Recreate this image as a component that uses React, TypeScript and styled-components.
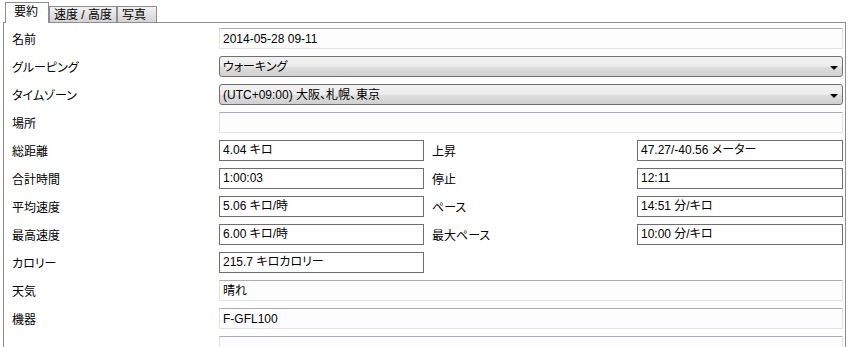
import React from "react";
import styled, { createGlobalStyle, css } from "styled-components";

const Global = createGlobalStyle`
  html, body {
    margin: 0;
    padding: 0;
    background: #ffffff;
    overflow: hidden;
  }
  body {
    font-family: "Liberation Sans", "Noto Sans CJK JP", sans-serif;
    font-size: 12px;
    color: #000000;
    font-feature-settings: "palt";
  }
`;

const Window = styled.div`
  width: 852px;
  height: 347px;
  overflow: hidden;
  padding-left: 3px;
  box-sizing: border-box;
`;

const TabBar = styled.div`
  display: flex;
  align-items: flex-end;
  height: 22px;
  padding-left: 2px;
`;

const Tab = styled.div<{ $active?: boolean }>`
  box-sizing: border-box;
  display: flex;
  align-items: center;
  border: 1px solid #8c8e94;
  border-bottom: none;
  line-height: 14px;
  white-space: nowrap;
  ${(p) =>
    p.$active
      ? css`
          height: 21px;
          margin-bottom: -1px;
          padding: 0 0 2px 8px;
          background: #ffffff;
          position: relative;
          z-index: 1;
        `
      : css`
          height: 16px;
          padding: 0 0 0 4px;
          background: linear-gradient(#f1f1f1, #e2e2e2 50%, #d3d3d3);
        `}
`;

const Panel = styled.div`
  box-sizing: border-box;
  width: 843px;
  height: 400px;
  border: 1px solid #8c8e94;
  background: #ffffff;
`;

const Form = styled.div`
  display: grid;
  grid-template-columns: 207px 205px 213px 206px;
  grid-auto-rows: 21px;
  row-gap: 7px;
  padding: 5px 2px 0 8px;
`;

const Label = styled.div<{ $right?: boolean }>`
  grid-column: ${(p) => (p.$right ? "3" : "1")};
  padding-left: ${(p) => (p.$right ? "8px" : "0")};
  align-self: center;
  line-height: 14px;
  padding-top: 2px;
  white-space: nowrap;
`;

const WideField = styled.div<{ $tall?: boolean }>`
  grid-column: 2 / -1;
  box-sizing: border-box;
  height: ${(p) => (p.$tall ? "60px" : "21px")};
  border: 1px solid #dfe2e8;
  border-top-color: #abadb3;
  background: #fdfdfd;
  padding: 3px 0 0 3px;
  line-height: 14px;
  white-space: nowrap;
`;

const SmallField = styled.div<{ $right?: boolean }>`
  grid-column: ${(p) => (p.$right ? "4" : "2")};
  box-sizing: border-box;
  width: ${(p) => (p.$right ? "206px" : "205px")};
  height: 21px;
  border: 1px solid #6e6e6e;
  background: #ffffff;
  padding: 2px 0 0 3px;
  line-height: 14px;
  white-space: nowrap;
`;

const Select = styled.div`
  grid-column: 2 / -1;
  box-sizing: border-box;
  height: 21px;
  display: flex;
  align-items: center;
  justify-content: space-between;
  border: 1px solid #707070;
  border-radius: 3px;
  background: linear-gradient(#f2f2f2, #ebebeb 50%, #dedede 51%, #d0d0d0);
  padding: 1px 4px 0 3px;
  line-height: 14px;
  white-space: nowrap;
`;

const Arrow = styled.span`
  width: 0;
  height: 0;
  border-left: 4px solid transparent;
  border-right: 4px solid transparent;
  border-top: 4px solid #000000;
  margin-top: 1px;
`;

type Pair = { label: string; value: string };

const halfRows: Array<[Pair, Pair | null]> = [
  [{ label: "総距離", value: "4.04 キロ" }, { label: "上昇", value: "47.27/-40.56 メーター" }],
  [{ label: "合計時間", value: "1:00:03" }, { label: "停止", value: "12:11" }],
  [{ label: "平均速度", value: "5.06 キロ/時" }, { label: "ペース", value: "14:51 分/キロ" }],
  [{ label: "最高速度", value: "6.00 キロ/時" }, { label: "最大ペース", value: "10:00 分/キロ" }],
  [{ label: "カロリー", value: "215.7 キロカロリー" }, null],
];

export default function App() {
  return (
    <>
      <Global />
      <Window>
        <TabBar>
          <Tab $active style={{ width: 44 }}>要約</Tab>
          <Tab style={{ width: 68 }}>速度 / 高度</Tab>
          <Tab style={{ width: 40 }}>写真</Tab>
        </TabBar>
        <Panel>
          <Form>
            <Label>名前</Label>
            <WideField>2014-05-28 09-11</WideField>

            <Label>グルーピング</Label>
            <Select>
              <span>ウォーキング</span>
              <Arrow />
            </Select>

            <Label>タイムゾーン</Label>
            <Select>
              <span>(UTC+09:00) 大阪、札幌、東京</span>
              <Arrow />
            </Select>

            <Label>場所</Label>
            <WideField />

            {halfRows.map(([left, right]) => (
              <React.Fragment key={left.label}>
                <Label>{left.label}</Label>
                <SmallField>{left.value}</SmallField>
                {right && (
                  <>
                    <Label $right>{right.label}</Label>
                    <SmallField $right>{right.value}</SmallField>
                  </>
                )}
              </React.Fragment>
            ))}

            <Label>天気</Label>
            <WideField>晴れ</WideField>

            <Label>機器</Label>
            <WideField>F-GFL100</WideField>

            <Label />
            <WideField $tall />
          </Form>
        </Panel>
      </Window>
    </>
  );
}
